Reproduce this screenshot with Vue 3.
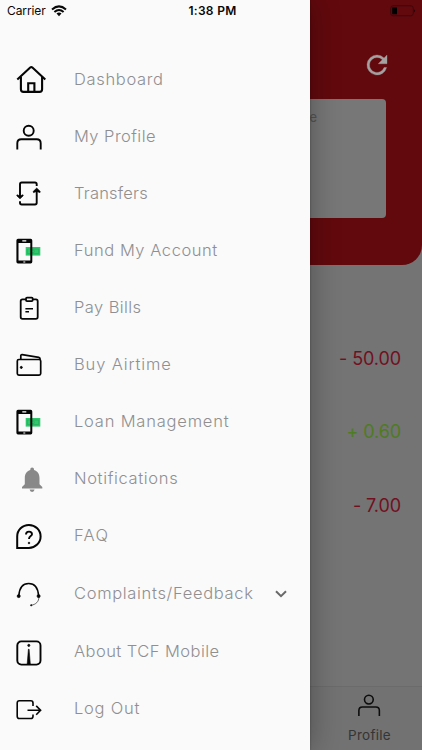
<template>
  <div class="screen">
    <main class="account">
      <header class="account__header">
        <div class="account__toolbar">
          <svg class="account__refresh" viewBox="0 0 24 24" aria-label="Refresh">
            <path d="M17.65 6.35A7.96 7.96 0 0 0 12 4a8 8 0 1 0 7.73 10h-2.08A6 6 0 1 1 12 6c1.66 0 3.14.69 4.22 1.78L13 11h7V4z" />
          </svg>
        </div>
        <div class="account__card"><span>Balance</span></div>
      </header>

      <ul class="account__amounts">
        <li v-for="item in amounts" :key="item.value" :class="item.type">{{ item.value }}</li>
      </ul>

      <nav class="tabbar">
        <div class="tabbar__item">
          <svg viewBox="0 0 32 32">
            <circle cx="14.7" cy="9.8" r="5" />
            <path d="M3.3 28.5v-6.3q0-4 4-4h15.4q4 0 4 4v6.3" />
          </svg>
          <span>Profile</span>
        </div>
      </nav>
    </main>

    <aside class="drawer">
      <ul class="menu">
        <li
          v-for="item in menu"
          :key="item.label"
          class="menu__item"
          :class="{ 'menu__item--group': item.expandable }"
        >
          <svg class="menu__icon" viewBox="0 0 32 32">
            <g v-if="item.icon === 'home'" stroke-width="2.1">
              <path d="M3.3 15.5 16.2 3.5q1.1-.9 2.2 0l12.9 12" />
              <path d="M6.9 13v12.3q0 2.6 2.6 2.6h16q2.6 0 2.6-2.6V13M14.2 27.5v-8.3h6.2v8.3" />
            </g>
            <g v-else-if="item.icon === 'user'" stroke-width="1.9">
              <circle cx="14.7" cy="9.8" r="5" />
              <path d="M3.3 28.5v-6.3q0-4 4-4h15.4q4 0 4 4v6.3" />
            </g>
            <g v-else-if="item.icon === 'transfer'" stroke-width="1.9">
              <path d="M22.7 8V6.2q0-1.7-1.7-1.7H7.7Q6 4.5 6 6.2V19M6 23.2v1.6q0 1.7 1.7 1.7H21q1.7 0 1.7-1.7V12.5" />
              <path class="solid" d="M3 16.8 6 18l3-1.2.2 1L6 20.8l-3.2-3zM19.5 14.6l3.2-1.2 3.2 1.2.4-1-3.6-3.5-3.6 3.5z" stroke-width="0.7" />
            </g>
            <g v-else-if="item.icon === 'phone'">
              <rect class="note" x="11.7" y="12" width="14.6" height="8.6" />
              <path class="note-mark" d="M13.3 14h11.4v4.6H13.3z" />
              <circle class="note-mark" cx="19" cy="16.3" r="1.4" />
              <path class="cutout" fill-rule="evenodd" d="M4 3.8h12.7q1.6 0 1.6 1.7v21.3q0 1.7-1.6 1.7H4q-1.6 0-1.6-1.7V5.5Q2.4 3.8 4 3.8zM4.5 8v17.6h11.8V8zM8.3 5.2v1.3h4V5.2zM9.3 26.5v1h2v-1z" />
            </g>
            <g v-else-if="item.icon === 'clipboard'" stroke-width="1.8">
              <path d="M12 7.4H8.5q-1.8 0-1.8 1.8V25q0 1.8 1.8 1.8h13.4q1.8 0 1.8-1.8V9.2q0-1.8-1.8-1.8h-3.2" />
              <rect x="12" y="5.7" width="6.7" height="3.4" rx="1" />
              <path d="M11.4 16.8H19M11.4 19.8H15" stroke-width="1.5" />
            </g>
            <g v-else-if="item.icon === 'wallet'" stroke-width="1.7">
              <rect x="3.3" y="10.5" width="23.4" height="15.7" rx="1.6" />
              <path d="M6.8 10.3V6.8q0-1.4 1.4-1.2l16.6 2.8q1.4.3 1.4 2.2" />
              <circle class="solid" cx="7.3" cy="18.4" r="1" stroke-width="1" />
            </g>
            <g v-else-if="item.icon === 'bell'" class="bell">
              <path d="M18.1 4.5c1.2 0 1.9.8 1.9 2v.5c3.8 1 5.5 4.2 5.5 8v6.2l2.8 2.8v1.4H8V24l2.8-2.8V15c0-3.8 1.7-7 5.5-8v-.5c0-1.2.7-2 1.8-2zM15.6 26.6h5q-.3 2.3-2.5 2.3t-2.5-2.3z" />
            </g>
            <g v-else-if="item.icon === 'faq'" stroke-width="2">
              <path d="M3.2 27.9V16.4a11.7 11.5 0 1 1 11.7 11.5z" />
              <path d="M12 14.5q0-2.9 3-2.9t3 2.6c0 2-3 1.9-3 4.7" stroke-width="1.9" />
              <circle class="solid" cx="15" cy="23" r=".8" stroke-width=".8" />
            </g>
            <g v-else-if="item.icon === 'headset'" stroke-width="1.5">
              <path d="M4.8 18C5.3 10.4 8.4 5.6 14.7 5.6S24.1 10.4 24.6 18" />
              <path d="M24.8 19c.3 4.6-3.2 7.6-7.5 8.2" stroke-width=".6" />
              <circle class="solid" cx="4.7" cy="18.1" r="1.5" stroke-width=".8" />
              <circle class="solid" cx="24.6" cy="18.1" r="1.5" stroke-width=".8" />
              <circle class="solid" cx="17.2" cy="27.3" r=".7" stroke-width=".6" />
            </g>
            <g v-else-if="item.icon === 'info'" stroke-width="1.9">
              <rect x="3.3" y="5.4" width="23.2" height="23.2" rx="4" />
              <circle class="solid" cx="14.8" cy="9.4" r="1.1" stroke-width=".7" />
              <path class="solid" d="M14.4 13.2h.7l1.2 14.8h-3.1z" stroke-width=".6" />
            </g>
            <g v-else stroke-width="1.6">
              <path d="M19 13V10q0-2.2-2.2-2.2H5.4Q3.2 7.8 3.2 10v13.2q0 2.3 2.2 2.3h11.4q2.2 0 2.2-2.3V21.4" />
              <path d="M13.5 17.3h13M22.2 12.9l4.4 4.4-4.4 4.4" />
            </g>
          </svg>
          <span class="menu__label" :style="{ letterSpacing: item.tracking + 'px' }">{{ item.label }}</span>
          <svg v-if="item.expandable" class="menu__chevron" viewBox="0 0 14 10">
            <path d="m2 2.2 5 5 5-5" />
          </svg>
        </li>
      </ul>
    </aside>

    <div class="statusbar">
      <div class="statusbar__carrier">
        <span>Carrier</span>
        <svg viewBox="0 0 16 12">
          <path d="M1 4.5q7-6.2 14 0M3.4 7q4.6-4 9.2 0" />
          <path class="statusbar__wifi-dot" d="M5.5 8.6q2.5-2 5 0L8 11.2z" />
        </svg>
      </div>
      <strong>1:38 PM</strong>
      <svg class="statusbar__battery" viewBox="0 0 26 12">
        <rect x=".7" y=".8" width="22.6" height="10" rx="2.5" />
        <path d="M2.2 2.4h4.8v6.8H2.2zM24.4 4.2q1.5 1.6 0 3.2z" />
      </svg>
    </div>
  </div>
</template>

<script setup>
const menu = [
  { label: 'Dashboard', icon: 'home', tracking: 0.67 },
  { label: 'My Profile', icon: 'user', tracking: 0.45 },
  { label: 'Transfers', icon: 'transfer', tracking: 0.2 },
  { label: 'Fund My Account', icon: 'phone', tracking: 0.55 },
  { label: 'Pay Bills', icon: 'clipboard', tracking: 0.42 },
  { label: 'Buy Airtime', icon: 'wallet', tracking: 0.87 },
  { label: 'Loan Management', icon: 'phone', tracking: 0.8 },
  { label: 'Notifications', icon: 'bell', tracking: 0.65 },
  { label: 'FAQ', icon: 'faq', tracking: 1.3 },
  { label: 'Complaints/Feedback', icon: 'headset', tracking: 0.67, expandable: true },
  { label: 'About TCF Mobile', icon: 'info', tracking: 0.45 },
  { label: 'Log Out', icon: 'logout', tracking: 0.75 },
]

const amounts = [
  { value: '- 50.00', type: 'debit' },
  { value: '+ 0.60', type: 'credit' },
  { value: '- 7.00', type: 'debit' },
]
</script>

<style>
body {
  margin: 0;
}
</style>

<style scoped>
.screen {
  position: relative;
  width: 422px;
  height: 750px;
  overflow: hidden;
  background: #747474;
  font-family: Inter, 'Liberation Sans', sans-serif;
}

ul {
  margin: 0;
  padding: 0;
  list-style: none;
}

svg {
  display: block;
  flex: none;
}

.account {
  height: 100%;
  display: flex;
  flex-direction: column;
}

.account__header {
  box-sizing: border-box;
  height: 265px;
  padding: 50px 36px 0;
  border-radius: 0 0 20px 20px;
  background: #62090d;
}

.account__toolbar {
  height: 49px;
  display: flex;
  justify-content: flex-end;
}

.account__refresh {
  width: 30px;
  height: 30px;
  margin-right: -6px;
  fill: #a5a1a1;
  stroke: #a5a1a1;
  stroke-width: 0.25;
}

.account__card {
  box-sizing: border-box;
  height: 119px;
  padding: 10px 69px 0 0;
  border-radius: 4px;
  background: #777;
  color: #545454;
  font-size: 13px;
  line-height: 16px;
  text-align: right;
}

.account__amounts {
  flex: 1;
  padding: 57px 21px 0 0;
  font-size: 18px;
  letter-spacing: -0.1px;
  text-align: right;
}

.account__amounts li {
  height: 73.3px;
  line-height: 73.3px;
}

.debit {
  color: #721021;
}

.credit {
  color: #4f7b22;
}

.tabbar {
  box-sizing: border-box;
  height: 64px;
  border-top: 1px solid #6b6b6b;
  background: #727272;
  display: flex;
  justify-content: flex-end;
}

.tabbar__item {
  width: 105px;
  padding-top: 4px;
  display: flex;
  flex-direction: column;
  align-items: center;
  color: #353535;
  font-size: 13.5px;
  line-height: 18px;
  letter-spacing: 0.3px;
}

.tabbar__item svg {
  width: 28px;
  height: 28px;
  margin: 0 0 7px;
  fill: none;
  stroke: #0c0c0c;
  stroke-width: 1.8;
}

.drawer {
  position: absolute;
  inset: 0 auto 0 0;
  box-sizing: border-box;
  width: 310px;
  padding-top: 51px;
  background: #fafafa;
  box-shadow: 0 0 28px rgba(0, 0, 0, 0.32), 0 0 2px rgba(0, 0, 0, 0.3);
}

.menu__item {
  height: 57px;
  padding-left: 14px;
  display: flex;
  align-items: center;
}

.menu__item--group {
  height: 59px;
}

.menu__icon {
  width: 32px;
  height: 32px;
  margin-right: 28px;
  fill: none;
  stroke: #050505;
}

.menu__icon .solid {
  fill: #050505;
}

.menu__icon .cutout {
  fill: #050505;
  stroke: none;
}

.menu__icon .note {
  fill: #2fc86c;
  stroke: none;
}

.menu__icon .note-mark {
  fill: none;
  stroke: #24ad59;
  stroke-width: 0.7;
}

.menu__icon .bell {
  fill: #888;
  stroke: none;
}

.menu__label {
  padding-bottom: 2px;
  color: #8f8f91;
  font-size: 16.5px;
  font-weight: 300;
  line-height: 22px;
  white-space: nowrap;
}

.menu__chevron {
  width: 14px;
  height: 10px;
  margin: 1px 22px 0 auto;
  fill: none;
  stroke: #696969;
  stroke-width: 2;
}

.statusbar {
  position: absolute;
  inset: 0 0 auto;
  height: 21px;
  padding: 0 6px 0 7px;
  display: grid;
  grid-template-columns: 1fr auto 1fr;
  align-items: center;
  color: #080808;
  font-size: 12px;
}

.statusbar__carrier {
  display: flex;
  align-items: center;
  gap: 5px;
  letter-spacing: -0.1px;
}

.statusbar__carrier svg {
  width: 16px;
  height: 12px;
  fill: none;
  stroke: #080808;
  stroke-width: 2;
}

.statusbar__carrier .statusbar__wifi-dot {
  fill: #080808;
  stroke: none;
}

.statusbar strong {
  padding-left: 2px;
  font-weight: 600;
  letter-spacing: 0.3px;
}

.statusbar__battery {
  width: 26px;
  height: 12px;
  justify-self: end;
}

.statusbar__battery rect {
  fill: none;
  stroke: #3d080a;
}
</style>
